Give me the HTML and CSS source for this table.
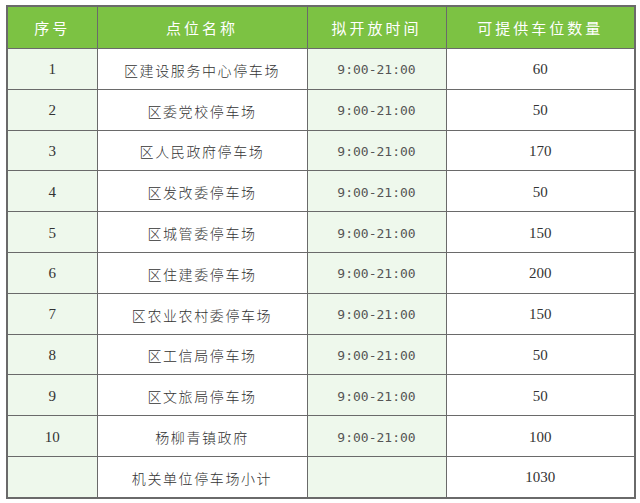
FILE: index.html
```html
<!DOCTYPE html>
<html lang="zh">
<head>
<meta charset="utf-8">
<link rel="stylesheet" href="styles.css">
</head>
<body>
<table class="park">
  <colgroup>
    <col class="c1"><col class="c2"><col class="c3"><col class="c4">
  </colgroup>
  <thead>
    <tr><th>序号</th><th>点位名称</th><th>拟开放时间</th><th>可提供车位数量</th></tr>
  </thead>
  <tbody>
    <tr><td class="g num">1</td><td class="name">区建设服务中心停车场</td><td class="g time">9:00-21:00</td><td class="num">60</td></tr>
    <tr><td class="g num">2</td><td class="name">区委党校停车场</td><td class="g time">9:00-21:00</td><td class="num">50</td></tr>
    <tr><td class="g num">3</td><td class="name">区人民政府停车场</td><td class="g time">9:00-21:00</td><td class="num">170</td></tr>
    <tr><td class="g num">4</td><td class="name">区发改委停车场</td><td class="g time">9:00-21:00</td><td class="num">50</td></tr>
    <tr><td class="g num">5</td><td class="name">区城管委停车场</td><td class="g time">9:00-21:00</td><td class="num">150</td></tr>
    <tr><td class="g num">6</td><td class="name">区住建委停车场</td><td class="g time">9:00-21:00</td><td class="num">200</td></tr>
    <tr><td class="g num">7</td><td class="name">区农业农村委停车场</td><td class="g time">9:00-21:00</td><td class="num">150</td></tr>
    <tr><td class="g num">8</td><td class="name">区工信局停车场</td><td class="g time">9:00-21:00</td><td class="num">50</td></tr>
    <tr><td class="g num">9</td><td class="name">区文旅局停车场</td><td class="g time">9:00-21:00</td><td class="num">50</td></tr>
    <tr><td class="g num">10</td><td class="name">杨柳青镇政府</td><td class="g time">9:00-21:00</td><td class="num">100</td></tr>
    <tr><td class="g num"></td><td class="name">机关单位停车场小计</td><td class="g time"></td><td class="num">1030</td></tr>
  </tbody>
</table>
</body>
</html>
```
FILE: styles.css
```css
html, body {
  margin: 0;
  padding: 0;
  background: #ffffff;
}
body {
  padding: 5px 0 0 6px;
}
.park {
  border-collapse: collapse;
  table-layout: fixed;
  width: 628px;
  border: 2px solid #6a6a6a;
}
.c1 { width: 90px; }
.c2 { width: 210px; }
.c3 { width: 139px; }
.c4 { width: 189px; }
.park th, .park td {
  border: 1.5px solid #6a6a6a;
  text-align: center;
  vertical-align: middle;
  padding: 0;
}
.park th {
  height: 41px;
  background: #7cc243;
  color: #ffffff;
  font-family: "Noto Sans CJK SC", sans-serif;
  font-weight: 400;
  font-size: 15px;
  letter-spacing: 3px;
}
.park td {
  height: 37.8px;
  color: #333333;
  font-size: 14px;
  padding-top: 2px;
}
.park td.g {
  background: #eef8ec;
}
.park td.num {
  font-family: "Liberation Serif", serif;
  font-size: 15px;
}
.park td.name {
  font-family: "Noto Sans CJK SC", sans-serif;
  letter-spacing: 1.6px;
  font-weight: 300;
}
.park td.time {
  font-family: "DejaVu Sans Mono", monospace;
  font-size: 13px;
  color: #555555;
}
```
